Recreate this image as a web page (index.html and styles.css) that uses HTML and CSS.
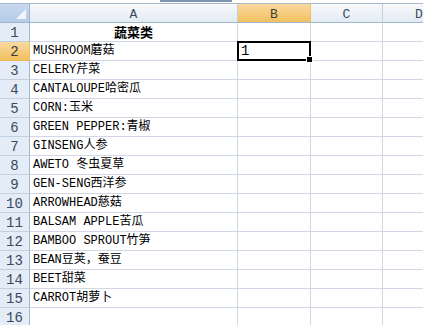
FILE: index.html
```html
<!DOCTYPE html>
<html lang="zh-CN">
<head>
  <meta charset="UTF-8" />
  <title>蔬菜类</title>
  <link rel="stylesheet" href="styles.css">
</head>
<body>
  <div class="topbar"><span class="topbar-tab"></span></div>

  <div class="sheet">
    <div class="hd corner"><span class="corner-tri"></span></div>
    <div class="hd col">A</div>
    <div class="hd col sel">B</div>
    <div class="hd col">C</div>
    <div class="hd col last">D</div>

    <div class="hd row">1</div>
    <div class="cell title">蔬菜类</div><div class="cell"></div><div class="cell"></div><div class="cell last"></div>

    <div class="hd row sel">2</div>
    <div class="cell">MUSHROOM蘑菇</div><div class="cell active">1<span class="handle"></span></div><div class="cell"></div><div class="cell last"></div>

    <div class="hd row">3</div>
    <div class="cell">CELERY芹菜</div><div class="cell"></div><div class="cell"></div><div class="cell last"></div>

    <div class="hd row">4</div>
    <div class="cell">CANTALOUPE哈密瓜</div><div class="cell"></div><div class="cell"></div><div class="cell last"></div>

    <div class="hd row">5</div>
    <div class="cell">CORN:玉米</div><div class="cell"></div><div class="cell"></div><div class="cell last"></div>

    <div class="hd row">6</div>
    <div class="cell">GREEN PEPPER:青椒</div><div class="cell"></div><div class="cell"></div><div class="cell last"></div>

    <div class="hd row">7</div>
    <div class="cell">GINSENG人参</div><div class="cell"></div><div class="cell"></div><div class="cell last"></div>

    <div class="hd row">8</div>
    <div class="cell">AWETO 冬虫夏草</div><div class="cell"></div><div class="cell"></div><div class="cell last"></div>

    <div class="hd row">9</div>
    <div class="cell">GEN-SENG西洋参</div><div class="cell"></div><div class="cell"></div><div class="cell last"></div>

    <div class="hd row">10</div>
    <div class="cell">ARROWHEAD慈菇</div><div class="cell"></div><div class="cell"></div><div class="cell last"></div>

    <div class="hd row">11</div>
    <div class="cell">BALSAM APPLE苦瓜</div><div class="cell"></div><div class="cell"></div><div class="cell last"></div>

    <div class="hd row">12</div>
    <div class="cell">BAMBOO SPROUT竹笋</div><div class="cell"></div><div class="cell"></div><div class="cell last"></div>

    <div class="hd row">13</div>
    <div class="cell">BEAN豆荚，蚕豆</div><div class="cell"></div><div class="cell"></div><div class="cell last"></div>

    <div class="hd row">14</div>
    <div class="cell">BEET甜菜</div><div class="cell"></div><div class="cell"></div><div class="cell last"></div>

    <div class="hd row">15</div>
    <div class="cell">CARROT胡萝卜</div><div class="cell"></div><div class="cell"></div><div class="cell last"></div>

    <div class="hd row">16</div>
    <div class="cell"></div><div class="cell"></div><div class="cell"></div><div class="cell last"></div>
  </div>
</body>
</html>
```

FILE: styles.css
```css
body {
  margin: 0;
  background: #fff;
  overflow: hidden;
  font-family: "Liberation Mono", "Noto Sans CJK SC", monospace;
}

.topbar {
  height: 4px;
  border-bottom: 1px solid #a9b8c9;
  box-sizing: border-box;
  display: flex;
  align-items: flex-start;
}

.topbar-tab {
  width: 72px;
  height: 2px;
  margin-left: 160px;
  background: #7f97b3;
}

.sheet {
  display: grid;
  grid-template-columns: 30px 208px 73px 72px 40px;
  grid-auto-rows: 19px;
}

.hd {
  box-sizing: border-box;
  display: flex;
  align-items: center;
  justify-content: center;
  color: #3b4a5c;
  font-size: 13px;
  line-height: 15px;
  border-right: 1px solid #9eb6ce;
  border-bottom: 1px solid #9eb6ce;
}

.col {
  background: linear-gradient(#f7f9fc, #e4ebf4);
  border-right-color: #c5d1de;
  border-bottom-color: #9eb6ce;
  padding-top: 2px;
}

.col.last {
  justify-content: flex-start;
  padding-left: 32px;
  border-right: none;
}

.row {
  background: #e4ecf7;
  border-bottom-color: #c2d0e0;
  font-size: 14px;
  padding-top: 2px;
}

.corner {
  background: linear-gradient(#c8d8ef, #b5cbe8);
  justify-content: flex-end;
  align-items: flex-end;
  padding: 0 3px 3px 0;
}

.corner-tri {
  width: 0;
  height: 0;
  border-left: 10px solid transparent;
  border-bottom: 10px solid #f2f6fb;
}

.hd.sel {
  background: linear-gradient(#f9d99f, #f1c15f);
  border-right-color: #f1c15f;
  color: #3b3b3b;
}

.row.sel {
  border-bottom-color: #e8b74f;
}

.cell {
  box-sizing: border-box;
  border-right: 1px solid #d0d7e5;
  border-bottom: 1px solid #d0d7e5;
  font-size: 12px;
  line-height: 15px;
  color: #000;
  padding: 2px 0 0 3px;
  white-space: nowrap;
}

.cell.last {
  border-right: none;
}

.cell.title {
  font-family: "Noto Sans CJK SC", sans-serif;
  font-weight: bold;
  text-align: center;
  font-size: 13px;
  padding: 1px 0 0 0;
}

.cell.active {
  position: relative;
  border: 2px solid #000;
  margin: -1px 0 0 -1px;
  font-size: 14px;
  padding: 1px 0 0 2px;
}

.handle {
  position: absolute;
  right: -4px;
  bottom: -4px;
  width: 5px;
  height: 5px;
  background: #000;
  border: 1px solid #fff;
}
```
